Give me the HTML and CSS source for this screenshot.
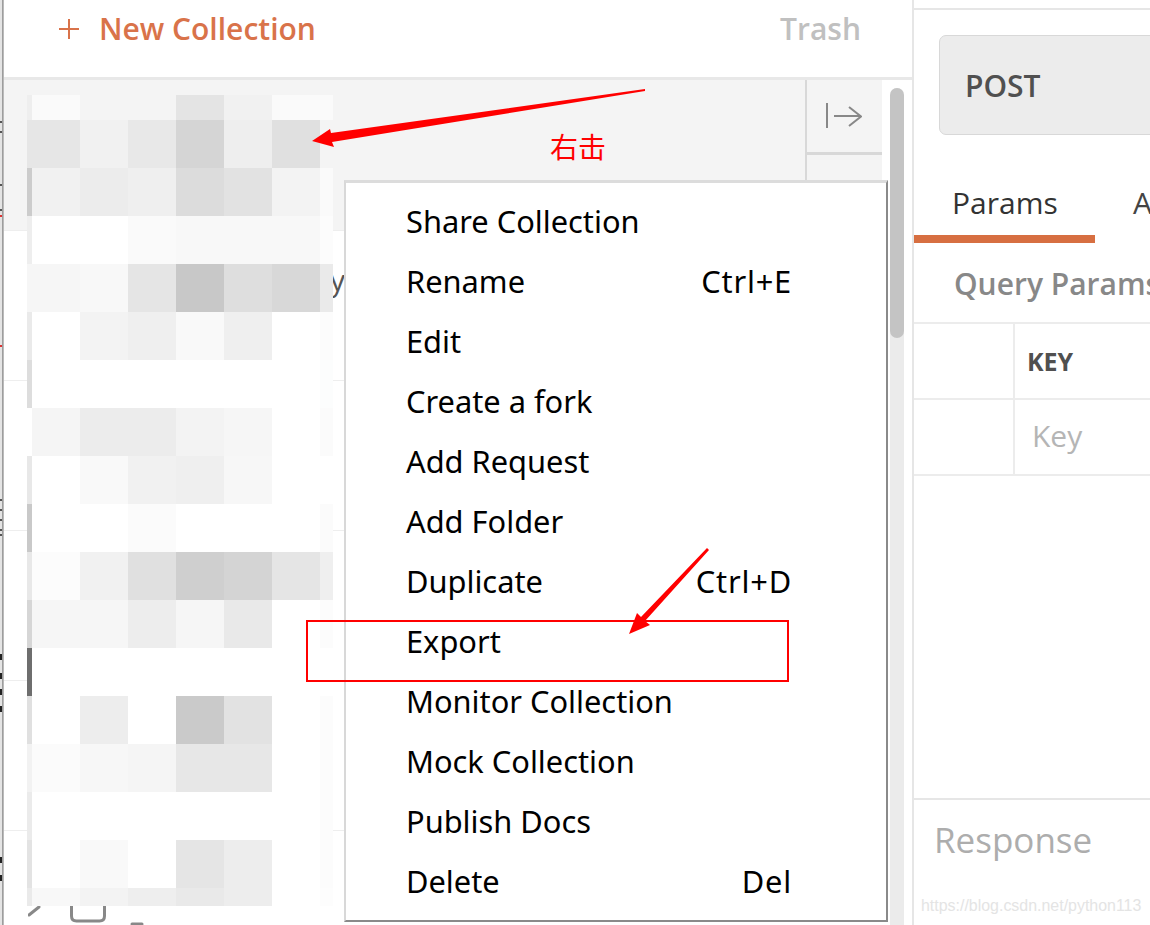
FILE: index.html
```html
<!DOCTYPE html>
<html lang="en">
<head>
<meta charset="utf-8">
<title>Export a collection</title>
<link rel="stylesheet" href="styles.css">
</head>
<body>
<div class="app">
  <svg class="edge" width="4" height="925" viewBox="0 0 4 925">
    <rect x="0" width="2.300" height="925" fill="#e4e4e4"/>
    <rect x="2.300" width="1.200" height="925" fill="#777"/>
    <path d="M0 122h2M0 132h2M0 185h2M0 210h2M0 500h2M0 510h2M0 520h2M0 530h2M0 535h2" stroke="#555" stroke-width="2"/>
    <path d="M0 216h2M0 346h2" stroke="#d33" stroke-width="2"/>
    <path d="M0 657h2M0 676h2M0 692h2M0 709h2M0 860h2M0 878h2" stroke="#222" stroke-width="6"/>
  </svg>

  <aside class="sidebar">
    <header class="side-head">
      <svg class="plus" width="22" height="22" viewBox="0 0 22 22"><path d="M11 1v20M1 11h20"/></svg>
      <span class="new">New Collection</span>
      <span class="trash">Trash</span>
    </header>
    <div class="side-body">
      <div class="list">
        <div class="row row-active">
          <div class="row-main"></div>
          <div class="actions">
            <div class="action action-top">
              <svg width="36" height="26" viewBox="0 0 36 26"><path d="M1 0v25M8 13h27M23 4l12 9.500-12 9.500"/></svg>
            </div>
            <div class="action"></div>
          </div>
        </div>
        <div class="row"><span class="row-name">y</span></div>
        <div class="row"></div>
        <div class="row"></div>
        <div class="row"></div>
        <div class="row row-last">
          <svg class="tools" width="120" height="20" viewBox="0 0 120 20">
            <path class="tool" d="M1 10l10-8"/>
            <path class="tool" d="M43.500 0v11q0 5 5 5h23q5 0 5-5V0"/>
            <path class="tool" d="M104 19h10"/>
          </svg>
        </div>
      </div>
      <div class="scroll"><div class="thumb"></div></div>
    </div>
  </aside>

  <main class="pane">
    <div class="pane-top"></div>
    <div class="method">POST</div>
    <nav class="tabs">
      <span class="tab tab-on">Params</span>
      <span class="tab">Authorization</span>
    </nav>
    <h2 class="query">Query Params</h2>
    <div class="param-row">
      <div class="check"></div>
      <b class="key-head">KEY</b>
    </div>
    <div class="param-row">
      <div class="check"></div>
      <span class="key-input">Key</span>
    </div>
    <div class="spacer"></div>
    <div class="response">Response</div>
  </main>
</div>

<svg class="mosaic" width="306" height="811" viewBox="27 95 306 811" shape-rendering="crispEdges">
  <rect x="27" y="95" width="306" height="811" fill="#fff"/>
  <g>
    <rect x="27" y="95" width="5" height="25" fill="#eee"/><rect x="32" y="95" width="48" height="25" fill="#fafafa"/><rect x="80" y="95" width="96" height="25" fill="#f4f4f4"/><rect x="176" y="95" width="48" height="25" fill="#e4e4e4"/><rect x="224" y="95" width="48" height="25" fill="#f1f1f1"/><rect x="272" y="95" width="61" height="25" fill="#fafafa"/>
    <rect x="27" y="120" width="53" height="48" fill="#e6e6e6"/><rect x="80" y="120" width="48" height="48" fill="#f1f1f1"/><rect x="128" y="120" width="48" height="48" fill="#e8e8e8"/><rect x="176" y="120" width="48" height="48" fill="#d5d5d5"/><rect x="224" y="120" width="48" height="48" fill="#eee"/><rect x="272" y="120" width="48" height="48" fill="#e0e0e0"/><rect x="320" y="120" width="13" height="48" fill="#f4f4f4"/>
    <rect x="27" y="168" width="5" height="48" fill="#ccc"/><rect x="32" y="168" width="48" height="48" fill="#f1f1f1"/><rect x="80" y="168" width="48" height="48" fill="#ececec"/><rect x="128" y="168" width="48" height="48" fill="#efefef"/><rect x="176" y="168" width="48" height="48" fill="#dcdcdc"/><rect x="224" y="168" width="48" height="48" fill="#e2e2e2"/><rect x="272" y="168" width="48" height="48" fill="#f3f3f3"/><rect x="320" y="168" width="13" height="48" fill="#fafafa"/>
    <rect x="27" y="216" width="5" height="48" fill="#eee"/><rect x="128" y="216" width="48" height="48" fill="#fafafa"/><rect x="176" y="216" width="144" height="48" fill="#f8f8f8"/><rect x="320" y="216" width="13" height="48" fill="#fcfcfc"/>
    <rect x="27" y="264" width="53" height="48" fill="#f6f6f6"/><rect x="80" y="264" width="48" height="48" fill="#f8f8f8"/><rect x="128" y="264" width="48" height="48" fill="#e5e5e5"/><rect x="176" y="264" width="48" height="48" fill="#c8c8c8"/><rect x="224" y="264" width="48" height="48" fill="#dedede"/><rect x="272" y="264" width="48" height="48" fill="#d8d8d8"/><rect x="320" y="264" width="13" height="48" fill="#eaeaea"/>
    <rect x="27" y="312" width="5" height="48" fill="#eaeaea"/><rect x="80" y="312" width="48" height="48" fill="#f3f3f3"/><rect x="128" y="312" width="48" height="48" fill="#efefef"/><rect x="176" y="312" width="48" height="48" fill="#f9f9f9"/><rect x="224" y="312" width="48" height="48" fill="#efefef"/><rect x="320" y="312" width="13" height="48" fill="#fcfcfc"/>
    <rect x="27" y="360" width="5" height="48" fill="#ddd"/><rect x="320" y="360" width="13" height="48" fill="#fcfdfd"/>
    <rect x="32" y="408" width="48" height="48" fill="#f5f5f5"/><rect x="80" y="408" width="96" height="48" fill="#ececec"/><rect x="176" y="408" width="48" height="48" fill="#f3f3f3"/><rect x="224" y="408" width="48" height="48" fill="#f6f6f6"/><rect x="320" y="408" width="13" height="48" fill="#fbfbfb"/>
    <rect x="27" y="456" width="5" height="48" fill="#e8e8e8"/><rect x="80" y="456" width="48" height="48" fill="#f9f9f9"/><rect x="128" y="456" width="48" height="48" fill="#f1f1f1"/><rect x="176" y="456" width="48" height="48" fill="#efefef"/><rect x="224" y="456" width="48" height="48" fill="#f7f7f7"/>
    <rect x="27" y="504" width="5" height="48" fill="#c9c9c9"/><rect x="128" y="504" width="48" height="48" fill="#fbfbfb"/><rect x="320" y="504" width="13" height="48" fill="#fbfbfb"/>
    <rect x="27" y="552" width="5" height="48" fill="#e8e8e8"/><rect x="32" y="552" width="48" height="48" fill="#fcfcfc"/><rect x="80" y="552" width="48" height="48" fill="#f1f1f1"/><rect x="128" y="552" width="48" height="48" fill="#e0e0e0"/><rect x="176" y="552" width="48" height="48" fill="#cfcfcf"/><rect x="224" y="552" width="48" height="48" fill="#d4d4d4"/><rect x="272" y="552" width="48" height="48" fill="#e5e5e5"/><rect x="320" y="552" width="13" height="48" fill="#efefef"/>
    <rect x="27" y="600" width="5" height="48" fill="#d6d6d6"/><rect x="32" y="600" width="96" height="48" fill="#f6f6f6"/><rect x="128" y="600" width="48" height="48" fill="#ededed"/><rect x="176" y="600" width="48" height="48" fill="#f6f6f6"/><rect x="224" y="600" width="48" height="48" fill="#e9e9e9"/><rect x="320" y="600" width="13" height="48" fill="#fcfcfc"/>
    <rect x="27" y="648" width="5" height="48" fill="#6e6e6e"/>
    <rect x="27" y="696" width="5" height="48" fill="#e0e0e0"/><rect x="80" y="696" width="48" height="48" fill="#ededed"/><rect x="176" y="696" width="48" height="48" fill="#cacaca"/><rect x="224" y="696" width="48" height="48" fill="#e2e2e2"/><rect x="320" y="696" width="13" height="48" fill="#fcfcfc"/>
    <rect x="27" y="744" width="5" height="48" fill="#f2f2f2"/><rect x="32" y="744" width="48" height="48" fill="#fbfbfb"/><rect x="80" y="744" width="48" height="48" fill="#f7f7f7"/><rect x="128" y="744" width="48" height="48" fill="#f5f5f5"/><rect x="176" y="744" width="96" height="48" fill="#e7e7e7"/><rect x="320" y="744" width="13" height="48" fill="#fcfcfc"/>
    <rect x="27" y="792" width="5" height="48" fill="#ebebeb"/><rect x="320" y="792" width="13" height="48" fill="#fcfcfc"/>
    <rect x="27" y="840" width="5" height="48" fill="#e3e3e3"/><rect x="80" y="840" width="48" height="48" fill="#f9f9f9"/><rect x="176" y="840" width="48" height="48" fill="#e5e5e5"/><rect x="224" y="840" width="48" height="48" fill="#ededed"/><rect x="320" y="840" width="13" height="48" fill="#fcfcfc"/>
    <rect x="27" y="888" width="5" height="18" fill="#eaeaea"/><rect x="32" y="888" width="48" height="18" fill="#f8f8f8"/><rect x="80" y="888" width="48" height="18" fill="#f3f3f3"/><rect x="128" y="888" width="48" height="18" fill="#eee"/><rect x="176" y="888" width="48" height="18" fill="#e9e9e9"/><rect x="224" y="888" width="48" height="18" fill="#ededed"/><rect x="320" y="888" width="13" height="18" fill="#fdfdfd"/>
  </g>
</svg>

<ul class="menu">
  <li>Share Collection</li>
  <li><span>Rename</span><span class="kbd">Ctrl+E</span></li>
  <li>Edit</li>
  <li>Create a fork</li>
  <li>Add Request</li>
  <li>Add Folder</li>
  <li><span>Duplicate</span><span class="kbd">Ctrl+D</span></li>
  <li>Export</li>
  <li>Monitor Collection</li>
  <li>Mock Collection</li>
  <li>Publish Docs</li>
  <li><span>Delete</span><span class="kbd">Del</span></li>
</ul>

<svg class="marks" width="1150" height="925" viewBox="0 0 1150 925">
  <polygon points="645,89 331,133 330,129 312,141 334,147 332,142 645,91"/>
  <polygon points="707,548 641,617 637,613 629,634 650,625 645,621 709,550"/>
</svg>
<div class="red-box"></div>
<span class="note">右击</span>
<span class="watermark">https://blog.csdn.net/python113</span>
</body>
</html>
```

FILE: styles.css
```css
* { box-sizing: border-box; }
html, body { margin: 0; height: 100%; overflow: hidden; background: #fff; }
body { font-family: "Open Sans", "Noto Sans", sans-serif; color: #333; }

.app { display: flex; width: 1150px; height: 925px; overflow: hidden; }
.edge { flex: none; display: block; }

.sidebar {
  flex: none; width: 910px; height: 925px;
  display: flex; flex-direction: column;
  border-right: 2px solid #e6e6e6;
}
.side-head {
  flex: none; height: 80px;
  display: flex; align-items: center;
  padding: 0 51px 19px 54px;
  border-bottom: 3px solid #e8e8e8;
}
.plus { flex: none; }
.plus path { fill: none; stroke: #d9734a; stroke-width: 2; }
.new { margin-left: 19px; font-size: 30px; line-height: 40px; font-weight: 600; color: #d9734a; }
.trash { margin-left: auto; font-size: 30px; line-height: 40px; font-weight: 600; color: #c0c0c0; }

.side-body { flex: 1; display: flex; min-height: 0; }
.list { width: 878px; flex: none; }
.row { height: 150px; border-bottom: 1px solid #eee; display: flex; }
.row-active { height: 151px; background: #f4f4f4; }
.row-main { flex: 1; }
.row-name { margin: 29px 0 0 326px; font-size: 30px; line-height: 40px; color: #555; }
.row-last { border-bottom: 0; height: 94px; padding: 74px 0 0 24px; }
.tools { display: block; }
.tool { fill: none; stroke: #888; stroke-width: 3; stroke-linecap: round; }

.actions { flex: none; width: 77px; height: 100px; border-left: 2px solid #d8d8d8; display: flex; flex-direction: column; }
.action { flex: 1; }
.action-top {
  flex: none; height: 75px;
  display: flex; align-items: center; justify-content: center;
  padding: 0 2px 0 0;
  border-bottom: 3px solid #d8d8d8;
}
.action svg path { fill: none; stroke: #888; stroke-width: 2; }

.scroll { flex: none; width: 14px; margin: 8px 0 0 8px; background: #ebebeb; border-radius: 7px 7px 0 0; }
.thumb { height: 250px; background: #c4c4c4; border-radius: 7px; }

.pane { flex: 1; min-width: 0; height: 925px; display: flex; flex-direction: column; overflow: hidden; }
.pane-top { flex: none; height: 10px; border-bottom: 2px solid #e6e6e6; }
.method {
  flex: none; width: 300px; height: 100px; margin: 25px 0 0 25px;
  display: flex; align-items: center; padding-left: 25px;
  background: #ececec; border: 1px solid #d8d8d8; border-radius: 7px;
  font-size: 30px; font-weight: 600; color: #505050;
}
.tabs { flex: none; display: flex; height: 108px; align-items: flex-end; white-space: nowrap; }
.tab { font-size: 30px; line-height: 42px; height: 61px; padding: 0 0 0 38px; color: #444; }
.tab-on { width: 181px; border-bottom: 8px solid #d76f41; color: #333; flex: none; }
.query { flex: none; margin: 0; height: 81px; padding: 21px 0 0 40px; font-size: 30px; line-height: 40px; font-weight: 600; color: #888; white-space: nowrap; border-bottom: 2px solid #ececec; }
.param-row { flex: none; height: 76px; display: flex; align-items: center; border-bottom: 2px solid #ececec; }
.check { flex: none; width: 101px; height: 100%; border-right: 2px solid #ececec; }
.key-head { margin-left: 12px; font-size: 25px; font-weight: 700; color: #505050; }
.key-input { margin: 0 0 4px 17px; font-size: 30px; color: #b5b5b5; }
.spacer { flex: 1; }
.response { flex: none; height: 127px; padding: 17px 0 0 20px; border-top: 2px solid #e6e6e6; font-size: 35px; line-height: 46px; color: #adadad; }

.mosaic { position: absolute; left: 27px; top: 95px; display: block; }

.menu {
  position: absolute; left: 344px; top: 180px;
  width: 544px; height: 742px;
  margin: 0; padding: 11px 94px 0 60px;
  list-style: none; background: #fff;
  border-top: 3px solid #dcdcdc;
  border-left: 2px solid #d8d8d8;
  border-right: 2px solid #8a8a8a;
  border-bottom: 2px solid #8a8a8a;
  font-family: "Noto Sans", "Open Sans", sans-serif;
  font-size: 30.800px; color: #000;
}
.menu li { height: 60px; line-height: 54px; display: flex; justify-content: space-between; white-space: nowrap; }
.kbd { letter-spacing: 0.8px; }

.marks { position: absolute; left: 0; top: 0; display: block; pointer-events: none; }
.marks polygon { fill: #f00; }
.red-box { position: absolute; left: 306px; top: 620px; width: 483px; height: 62px; border: 2px solid #f00; }
.note { position: absolute; left: 550px; top: 126px; font-family: "Noto Sans CJK SC", sans-serif; font-size: 28px; line-height: 40px; color: #f00; }
.watermark { position: absolute; left: 921px; top: 896px; font-family: "Liberation Sans", sans-serif; font-size: 15.950px; line-height: 20px; color: #e4e4e4; white-space: nowrap; }
```
